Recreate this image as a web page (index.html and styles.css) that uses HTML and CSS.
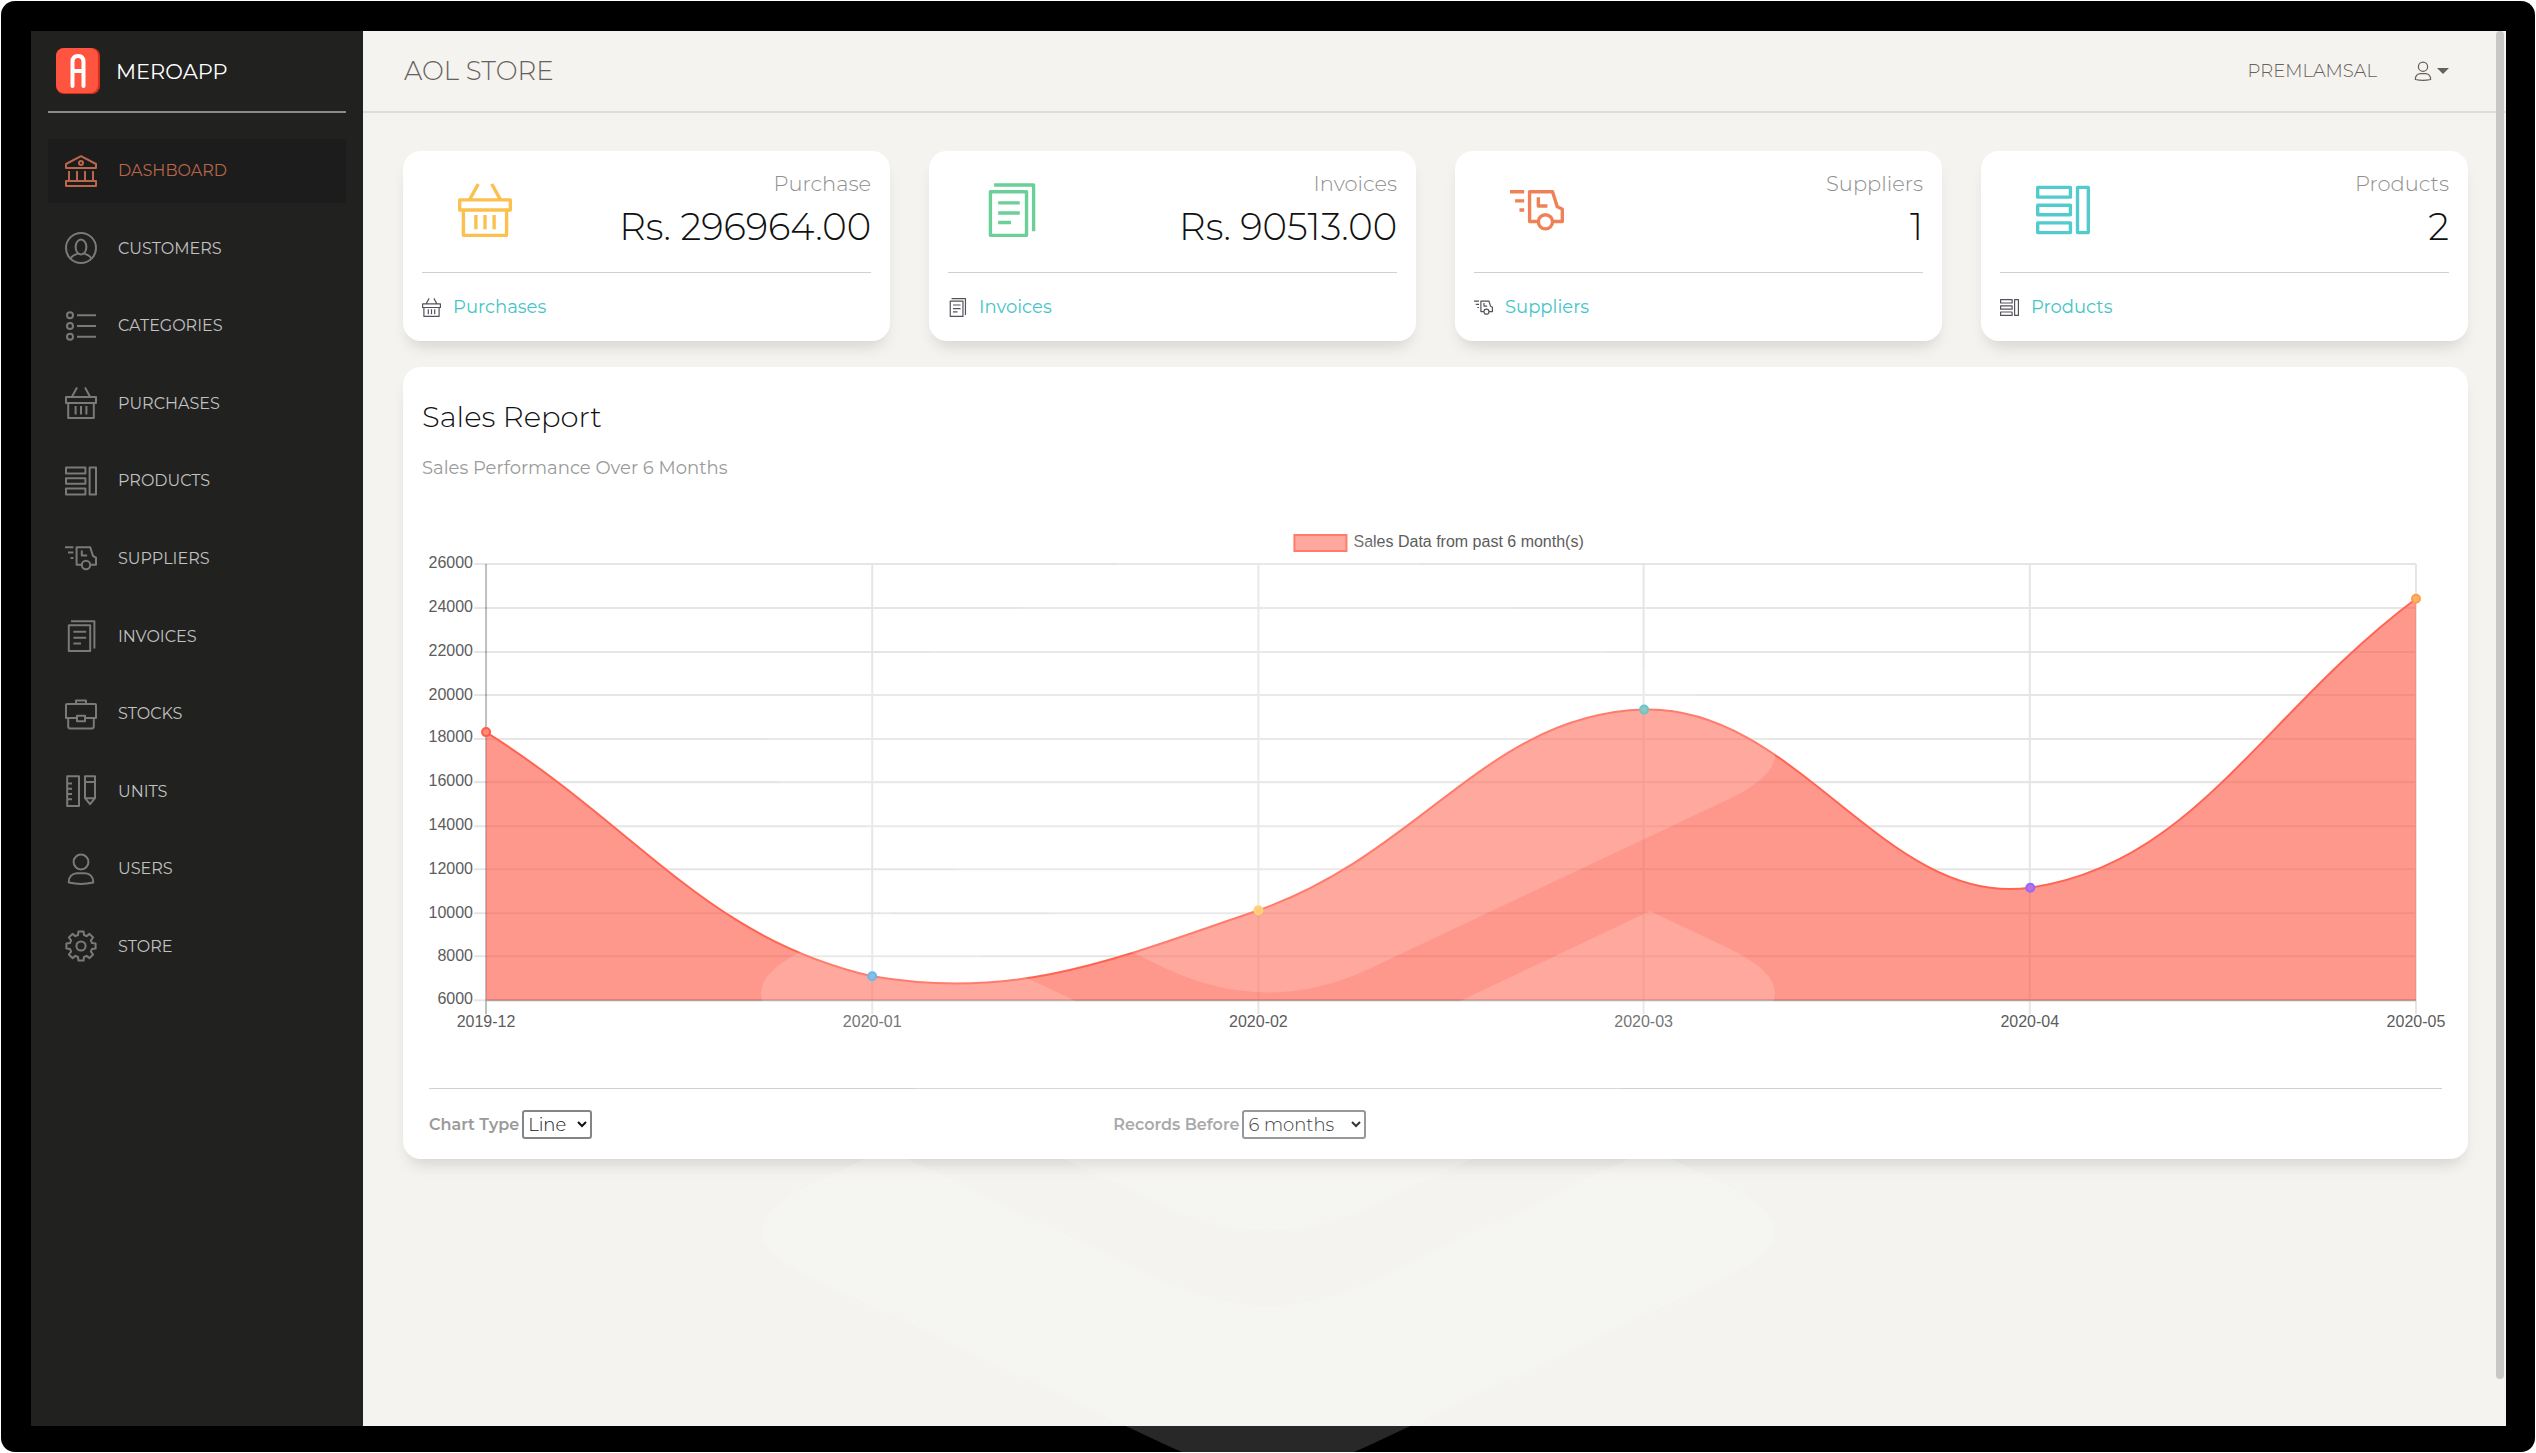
FILE: index.html
```html
<!DOCTYPE html>
<html lang="en">
<head>
<meta charset="utf-8">
<meta name="viewport" content="width=device-width, initial-scale=1">
<title>MeroApp Dashboard</title>
<link rel="stylesheet" href="styles.css">
</head>
<body>
<svg class="sprite" aria-hidden="true">
  <symbol id="i-bank" viewBox="0 0 16 16"><path d="M.5 6.5v-2L8 .6l7.500 3.900v2zM2 8v5M6 8v5M10 8v5M14 8v5M.5 13h15v2.500H.5z"/><circle cx="8" cy="4" r="1"/></symbol>
  <symbol id="i-customer" viewBox="0 0 16 16"><circle cx="8" cy="8" r="7.500"/><ellipse cx="8" cy="7.500" rx="2.700" ry="3.700"/><path d="M2.800 13.300c.6-1.500 2-2 3.600-2.500M13.200 13.300c-.6-1.500-2-2-3.600-2.500"/></symbol>
  <symbol id="i-list" viewBox="0 0 16 16"><circle cx="2.500" cy="2.600" r="1.500"/><circle cx="2.500" cy="8" r="1.500"/><circle cx="2.500" cy="13.400" r="1.500"/><path d="M6 2.600h9.500M6 8h9.500M6 13.400h9.500"/></symbol>
  <symbol id="i-basket" viewBox="0 0 16 16"><path d="M6 .3L3.400 5M10 .3L12.600 5M.5 5h15v3H.5zM1.600 8v7.500h12.800V8M5.300 9.500v4.200M8 9.500v4.200M10.700 9.500v4.200"/></symbol>
  <symbol id="i-product" viewBox="0 0 16 16"><path d="M.5 1.300h9.700v2.900H.5zM.5 6.600h9.700v2.800H.5zM.5 11.800h9.700v2.900H.5zM12.300 1.300h3.200v13.400h-3.200z"/></symbol>
  <symbol id="i-truck" viewBox="0 0 16 16"><path d="M0 2.600h4.200M1.500 5.300h2.700M2.800 8h1.400M8.300 11.400H5.800V2.600h6.800L14 7l1.500.8v3.600h-2.900M8.400 4.200v2.600h2.700"/><circle cx="10.500" cy="11.500" r="2.100"/></symbol>
  <symbol id="i-paper" viewBox="0 0 16 16"><path d="M1.900 2.600h10.700v12.900H1.900zM3 .6h11.700v13.700M4.200 5.900h6.400M4.200 8.900h6.400M4.200 11.700H8"/></symbol>
  <symbol id="i-case" viewBox="0 0 16 16"><path d="M5.500 3V1.300h5V3M1 3h14q.5 0 .5.5V10H10M6 10H.5V3.500Q.5 3 1 3M1.600 10v4.300q0 .9.9.9h11q.9 0 .9-.9V10M6 8.900h4v2.700H6z"/></symbol>
  <symbol id="i-ruler" viewBox="0 0 16 16"><path d="M1.100.6H7v14.900H1.100zM1.100 4.300h2.400M1.100 6.900h2.400M1.100 9.500h2.400M1.100 12.100h2.400M10 .6h5v11l-2.500 3-2.500-3zM10 3.500h5M10 11.600h5"/></symbol>
  <symbol id="i-user" viewBox="0 0 16 16"><circle cx="8" cy="4.500" r="3.700"/><path d="M1.900 14.800c-.2-3 1.900-4.700 4.100-4.700h4c2.200 0 4.300 1.700 4.100 4.700-3.700.8-8.500.8-12.200 0z"/></symbol>
  <symbol id="i-gear" viewBox="0 0 16 16"><g transform="translate(8 8)"><path d="M5.500-1.480L7.290-1.280V1.280L5.500 1.480 4.940 2.840 6.060 4.250 4.250 6.060 2.840 4.940 1.480 5.500 1.280 7.290H-1.280L-1.480 5.500-2.840 4.940-4.250 6.060-6.060 4.250-4.940 2.840-5.500 1.480-7.290 1.280V-1.280L-5.500-1.480-4.940-2.840-6.060-4.250-4.250-6.060-2.840-4.940-1.480-5.500-1.280-7.290H1.280L1.480-5.500 2.840-4.940 4.250-6.060 6.060-4.250 4.940-2.840z"/><circle r="2.300"/></g></symbol>
</svg>

<div class="device">
  <div class="screen">
    <aside class="sidebar">
      <a class="brand" href="#">
        <svg class="brand-logo" viewBox="0 0 44 46" aria-hidden="true">
          <rect width="44" height="46" rx="8" fill="#d32f1d"/>
          <rect width="42" height="45" rx="8" fill="#ff5440"/>
          <path d="M16.500 38V14q0-6 5.500-6t5.500 6v24M16.500 23h11" fill="none" stroke="#fff" stroke-width="4" stroke-linecap="round"/>
        </svg>
        <span>MEROAPP</span>
      </a>
      <nav>
        <ul class="menu">
          <li><a class="active" href="#"><svg class="icon"><use href="#i-bank"/></svg>DASHBOARD</a></li>
          <li><a href="#"><svg class="icon"><use href="#i-customer"/></svg>CUSTOMERS</a></li>
          <li><a href="#"><svg class="icon"><use href="#i-list"/></svg>CATEGORIES</a></li>
          <li><a href="#"><svg class="icon"><use href="#i-basket"/></svg>PURCHASES</a></li>
          <li><a href="#"><svg class="icon"><use href="#i-product"/></svg>PRODUCTS</a></li>
          <li><a href="#"><svg class="icon"><use href="#i-truck"/></svg>SUPPLIERS</a></li>
          <li><a href="#"><svg class="icon"><use href="#i-paper"/></svg>INVOICES</a></li>
          <li><a href="#"><svg class="icon"><use href="#i-case"/></svg>STOCKS</a></li>
          <li><a href="#"><svg class="icon"><use href="#i-ruler"/></svg>UNITS</a></li>
          <li><a href="#"><svg class="icon"><use href="#i-user"/></svg>USERS</a></li>
          <li><a href="#"><svg class="icon"><use href="#i-gear"/></svg>STORE</a></li>
        </ul>
      </nav>
    </aside>

    <div class="main">
      <header class="topbar">
        <h1>AOL STORE</h1>
        <div class="account">
          <span>PREMLAMSAL</span>
          <button type="button" class="account-menu" aria-label="Account menu"><svg class="icon"><use href="#i-user"/></svg><i class="caret"></i></button>
        </div>
      </header>

      <main class="content">
        <section class="stats">
          <article class="card stat yellow">
            <div class="stat-top"><svg class="icon"><use href="#i-basket"/></svg><div><p class="stat-label">Purchase</p><p class="stat-value">Rs. 296964.00</p></div></div>
            <div class="stat-foot"><svg class="icon"><use href="#i-basket"/></svg><a href="#">Purchases</a></div>
          </article>
          <article class="card stat green">
            <div class="stat-top"><svg class="icon"><use href="#i-paper"/></svg><div><p class="stat-label">Invoices</p><p class="stat-value">Rs. 90513.00</p></div></div>
            <div class="stat-foot"><svg class="icon"><use href="#i-paper"/></svg><a href="#">Invoices</a></div>
          </article>
          <article class="card stat orange">
            <div class="stat-top"><svg class="icon"><use href="#i-truck"/></svg><div><p class="stat-label">Suppliers</p><p class="stat-value">1</p></div></div>
            <div class="stat-foot"><svg class="icon"><use href="#i-truck"/></svg><a href="#">Suppliers</a></div>
          </article>
          <article class="card stat teal">
            <div class="stat-top"><svg class="icon"><use href="#i-product"/></svg><div><p class="stat-label">Products</p><p class="stat-value">2</p></div></div>
            <div class="stat-foot"><svg class="icon"><use href="#i-product"/></svg><a href="#">Products</a></div>
          </article>
        </section>

        <section class="card report">
          <h2>Sales Report</h2>
          <p class="report-sub">Sales Performance Over 6 Months</p>
          <svg class="chart" viewBox="422 525 2026 515" role="img" aria-label="Sales data line chart">
            <rect class="area outline" x="1294" y="535" width="52" height="16"/>
            <text x="1353" y="547">Sales Data from past 6 month(s)</text>
            <path class="grid" d="M474 564H2415M474 608H2415M474 652H2415M474 695H2415M474 739H2415M474 782H2415M474 826H2415M474 869H2415M474 913H2415M474 956H2415M474 1000H2415M872 564V1014M1258 564V1014M1643 564V1014M2029 564V1014M2415 564V1014"/>
            <path class="axis" d="M486 564V1014M486 1000H2415"/>
            <path class="area" d="M486 732C640.400 829.600 705.800 937.700 872 976C1014.600 1000.500 1111.700 960.500 1258 910C1420.300 853.900 1487.500 714 1643.500 709.500C1796.100 705 1884.800 908.300 2029.500 887.500C2193.400 864 2260.800 714.200 2415 598.700V1000H486z"/>
            <path class="line" d="M486 732C640.400 829.600 705.800 937.700 872 976C1014.600 1000.500 1111.700 960.500 1258 910C1420.300 853.900 1487.500 714 1643.500 709.500C1796.100 705 1884.800 908.300 2029.500 887.500C2193.400 864 2260.800 714.200 2415 598.700"/>
            <g class="dots">
              <circle cx="486" cy="732" r="4" fill="#ff8a7a" stroke="#ff5b48"/>
              <circle cx="872" cy="976" r="4" fill="#7aaed6" stroke="#4fabea"/>
              <circle cx="1258" cy="910" r="4" fill="#ffc069" stroke="#ffce56"/>
              <circle cx="1643.500" cy="709.500" r="4" fill="#84b5b4" stroke="#4bc0c0"/>
              <circle cx="2029.500" cy="887.500" r="4" fill="#b474dc" stroke="#9966ff"/>
              <circle cx="2415" cy="598.700" r="4" fill="#ffb072" stroke="#ff9f40"/>
            </g>
            <g text-anchor="end">
              <text x="473" y="568">26000</text><text x="473" y="612">24000</text><text x="473" y="656">22000</text><text x="473" y="700">20000</text><text x="473" y="742">18000</text><text x="473" y="786">16000</text><text x="473" y="830">14000</text><text x="473" y="874">12000</text><text x="473" y="918">10000</text><text x="473" y="961">8000</text><text x="473" y="1004">6000</text>
            </g>
            <g text-anchor="middle">
              <text x="486" y="1027">2019-12</text><text x="872" y="1027">2020-01</text><text x="1258" y="1027">2020-02</text><text x="1643" y="1027">2020-03</text><text x="2029" y="1027">2020-04</text><text x="2415" y="1027">2020-05</text>
            </g>
          </svg>
          <form class="report-foot">
            <div><label for="type">Chart Type</label> <select id="type" class="type"><option>Line</option><option>Bar</option></select></div>
            <div><label for="range">Records Before</label> <select id="range" class="range"><option>6 months</option><option>12 months</option></select></div>
          </form>
        </section>
      </main>
      <div class="scroll-thumb"></div>
    </div>
  </div>

  <svg class="watermark" viewBox="0 0 2536 1453" preserveAspectRatio="xMidYMin slice" aria-hidden="true">
    <defs><path id="chevron" d="M886 911L809 947.500Q713 993 809 1038.500L1165 1206.600Q1268 1255.300 1371 1206.600L1727 1038.500Q1823 993 1727 947.500L1650 911L1371 1043.300Q1268 1091.700 1165 1043.300z"/></defs>
    <path d="M809 709Q713 754.500 809 800L1165 968Q1268 1016.800 1371 968L1727 800Q1823 754.500 1727 709L1371 541Q1268 492 1165 541z"/>
    <use href="#chevron"/>
    <use href="#chevron" y="238"/>
  </svg>
</div>
</body>
</html>
```
FILE: styles.css
```css
* { box-sizing: border-box; }

body {
  margin: 0;
  background: #fff;
  color: #111;
  font-family: Montserrat, Inter, sans-serif;
  font-weight: 300;
}

h1, h2, p, ul { margin: 0; padding: 0; font-weight: 300; }
a { color: inherit; text-decoration: none; }

.sprite { position: absolute; width: 0; height: 0; }

.icon {
  flex: none;
  width: 32px;
  height: 32px;
  fill: none;
  stroke: currentColor;
  stroke-width: 1;
  stroke-linejoin: round;
}

/* Monitor bezel */
.device {
  position: relative;
  display: flex;
  min-height: calc(100vh - 2px);
  margin: 1px;
  padding: 30px 29px 26px 30px;
  border-radius: 14px;
  background: #000;
  overflow: hidden;
}

.screen { display: flex; flex: 1; min-width: 0; background: #f4f3ef; }

.watermark {
  position: absolute;
  inset: -1px;
  width: calc(100% + 2px);
  height: calc(100% + 2px);
  fill: #fff;
  fill-opacity: 0.155;
  pointer-events: none;
}

/* Sidebar */
.sidebar {
  flex: none;
  width: 332px;
  padding: 0 17px;
  background: #212120;
  color: #c2c2c1;
}

.brand {
  display: flex;
  align-items: center;
  gap: 16px;
  height: 82px;
  padding-left: 8px;
  border-bottom: 2px solid #8b8b88;
  color: #fff;
  font-size: 21px;
  font-weight: 400;
}
.brand-logo { width: 44px; height: 46px; }

.menu {
  display: grid;
  grid-auto-rows: 1fr;
  height: 853px;
  margin-top: 19px;
  list-style: none;
}
.menu li { display: grid; align-items: center; }
.menu a {
  display: flex;
  align-items: center;
  gap: 21px;
  height: 64px;
  padding-left: 17px;
  font-size: 16px;
  font-weight: 400;
}
.menu .icon { color: #7a7a79; }
.menu .active { background: #1c1c1c; }
.menu .active, .menu .active .icon { color: #b8674a; }

/* Main column */
.main { position: relative; flex: 1; min-width: 0; }

.topbar {
  display: flex;
  align-items: center;
  justify-content: space-between;
  height: 82px;
  padding: 0 57px 0 41px;
  border-bottom: 2px solid #deddd9;
  color: #66615b;
}
.topbar h1 { font-size: 26px; }
.account { display: flex; align-items: center; gap: 36px; font-size: 18px; }
.account-menu {
  display: flex;
  align-items: center;
  gap: 4px;
  padding: 0;
  border: 0;
  background: none;
  color: #66615b;
}
.account-menu .icon { width: 20px; height: 22px; }
.caret {
  border: 6px solid transparent;
  border-top-color: currentColor;
  border-bottom: 0;
}

.scroll-thumb {
  position: absolute;
  top: 0;
  right: 2px;
  bottom: 47px;
  width: 8px;
  border-radius: 4px;
  background: #c8c7c5;
}

.content { padding: 38px 38px 0 40px; }

.card {
  border-radius: 18px;
  background: #fff;
  box-shadow: 0 10px 16px -6px rgba(0, 0, 0, 0.15);
}

.stats { display: grid; grid-template-columns: repeat(4, 1fr); gap: 39px; }
.stat { padding: 0 19px; }
.stat-top {
  display: flex;
  align-items: center;
  justify-content: space-between;
  padding: 17px 0 21px 36px;
  border-bottom: 1px solid #d0d0ce;
  text-align: right;
}
.stat-top .icon { width: 54px; height: 54px; }
.stat-label { color: #8f8f8f; font-size: 21px; line-height: 32px; }
.stat-value { margin-top: 3px; font-size: 37px; line-height: 48px; }
.stat-foot {
  display: flex;
  align-items: center;
  gap: 12px;
  height: 68px;
  font-size: 18px;
}
.stat-foot .icon { width: 19px; height: 19px; color: #55505a; }
.stat-foot a { color: #45c4c8; font-weight: 400; }

.yellow .stat-top .icon { color: #fbc04d; }
.green .stat-top .icon { color: #6bd098; }
.orange .stat-top .icon { color: #ef8157; }
.teal .stat-top .icon { color: #51cbce; }

/* Sales report */
.report { margin-top: 26px; padding: 28px 19px 0; }
.report h2 { font-size: 29px; line-height: 44px; }
.report-sub { margin-top: 15px; color: #9a9a9a; font-size: 18px; font-weight: 400; line-height: 28px; }

.chart { display: block; width: 100%; margin-top: 43px; }
.chart text { fill: #5c5c5c; font: 16px "Liberation Sans", Arial, sans-serif; }
.grid { stroke: rgba(0, 0, 0, 0.1); stroke-width: 2; }
.axis { stroke: rgba(0, 0, 0, 0.25); stroke-width: 2; }
.area { fill: rgba(255, 83, 64, 0.6); }
.outline, .line { stroke: #ff6452; stroke-width: 2; }
.line { fill: none; }
.dots { stroke-width: 2; }

.report-foot {
  display: grid;
  grid-template-columns: repeat(3, 1fr);
  gap: 40px;
  margin: 48px 7px 0;
  padding: 21px 0 20px;
  border-top: 1px solid #d0d0ce;
}
.report-foot div { display: flex; align-items: center; gap: 3px; }
.report-foot label { color: #9a9a9a; font-size: 16px; font-weight: 600; }
.report-foot select {
  height: 29px;
  padding: 0;
  border: 2px solid #858585;
  border-radius: 3px;
  background: #fff;
  color: #111;
  font: 300 18px Montserrat, Inter, sans-serif;
}
.type { width: 70px; }
.range { width: 124px; }
```
